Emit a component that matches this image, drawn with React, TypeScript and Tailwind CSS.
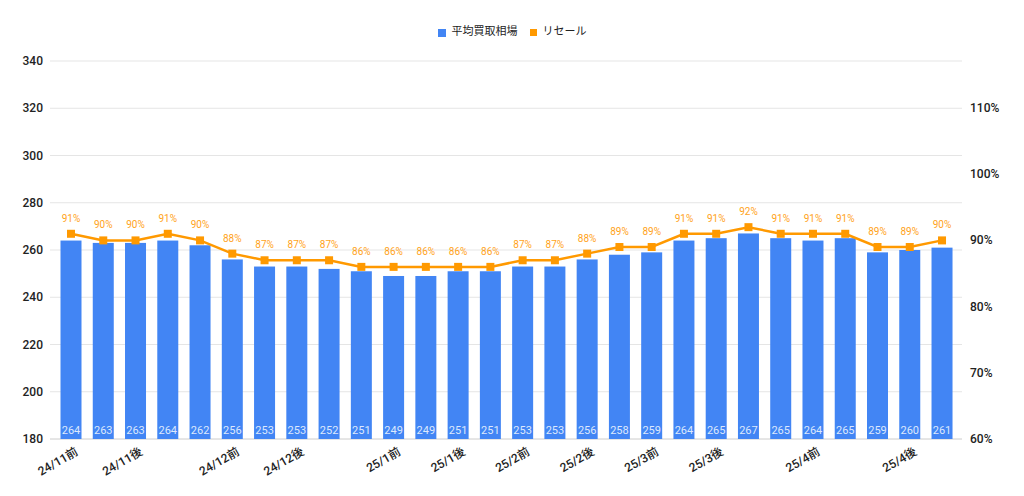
const vals=[264,263,263,264,262,256,253,253,252,251,249,249,251,251,253,253,256,258,259,264,265,267,265,264,265,259,260,261];
const pct=[91,90,90,91,90,88,87,87,87,86,86,86,86,86,87,87,88,89,89,91,91,92,91,91,91,89,89,90];
const labels:[number,string][]=[[0,"24/11前"],[2,"24/11後"],[5,"24/12前"],[7,"24/12後"],[10,"25/1前"],[12,"25/1後"],[14,"25/2前"],[16,"25/2後"],[18,"25/3前"],[20,"25/3後"],[23,"25/4前"],[26,"25/4後"]];
const yL=(v:number)=>439-(v-180)*(378/160);
const yR=(p:number)=>439-(p-60)*6.62;
const cx=(i:number)=>71+i*32.26;
export default function App(){
  const pts=pct.map((p,i)=>`${cx(i)},${yR(p)}`).join(" ");
  return(
    <div className="w-[1024px] h-[496px] bg-white relative" style={{fontFamily:"Roboto, 'Noto Sans CJK JP', sans-serif"}}>
      <div className="flex justify-center items-center gap-2 pt-[25px] h-[40px] text-[11px] text-[#222]">
        <div className="flex items-center gap-[6px]"><span className="w-[8px] h-[8px] bg-[#4285f4]"/>平均買取相場</div>
        <div className="flex items-center gap-[6px] ml-1"><span className="w-[7px] h-[7px] bg-[#ff9900]"/>リセール</div>
      </div>
      <svg width="1024" height="496" className="absolute left-0 top-0" style={{fontFamily:"Roboto, 'Noto Sans CJK JP', sans-serif"}}>
        {[180,200,220,240,260,280,300,320,340].map(v=>(
          <g key={v}>
            <line x1={50} x2={962} y1={yL(v)} y2={yL(v)} stroke={v===180?"#ccc":"#e5e5e5"} strokeWidth={1}/>
            <text x={43} y={yL(v)+4} textAnchor="end" fontSize={12} fontWeight={500} fill="#222">{v}</text>
          </g>))}
        {[60,70,80,90,100,110].map(p=>(
          <text key={p} x={970} y={yR(p)+4} fontSize={12} fontWeight={500} fill="#222">{p}%</text>))}
        {vals.map((v,i)=>(
          <g key={i}>
            <rect x={cx(i)-10.5} y={yL(v)} width={21} height={439-yL(v)} fill="#4285f4"/>
            <text x={cx(i)} y={434} textAnchor="middle" fontSize={11} fill="#dce8fd">{v}</text>
          </g>))}
        <polyline points={pts} fill="none" stroke="#ff9900" strokeWidth={2.5}/>
        {pct.map((p,i)=>(
          <g key={i}>
            <rect x={cx(i)-4} y={yR(p)-4} width={8} height={8} fill="#ff9900"/>
            <text x={cx(i)} y={yR(p)-12} textAnchor="middle" fontSize={10} fill="#ffa31a">{p}%</text>
          </g>))}
        {labels.map(([i,t])=>(
          <text key={t} transform={`translate(${cx(i)+8},454) rotate(-30)`} textAnchor="end" fontSize={12} fontWeight={500} fill="#222">{t}</text>))}
      </svg>
    </div>);
}
